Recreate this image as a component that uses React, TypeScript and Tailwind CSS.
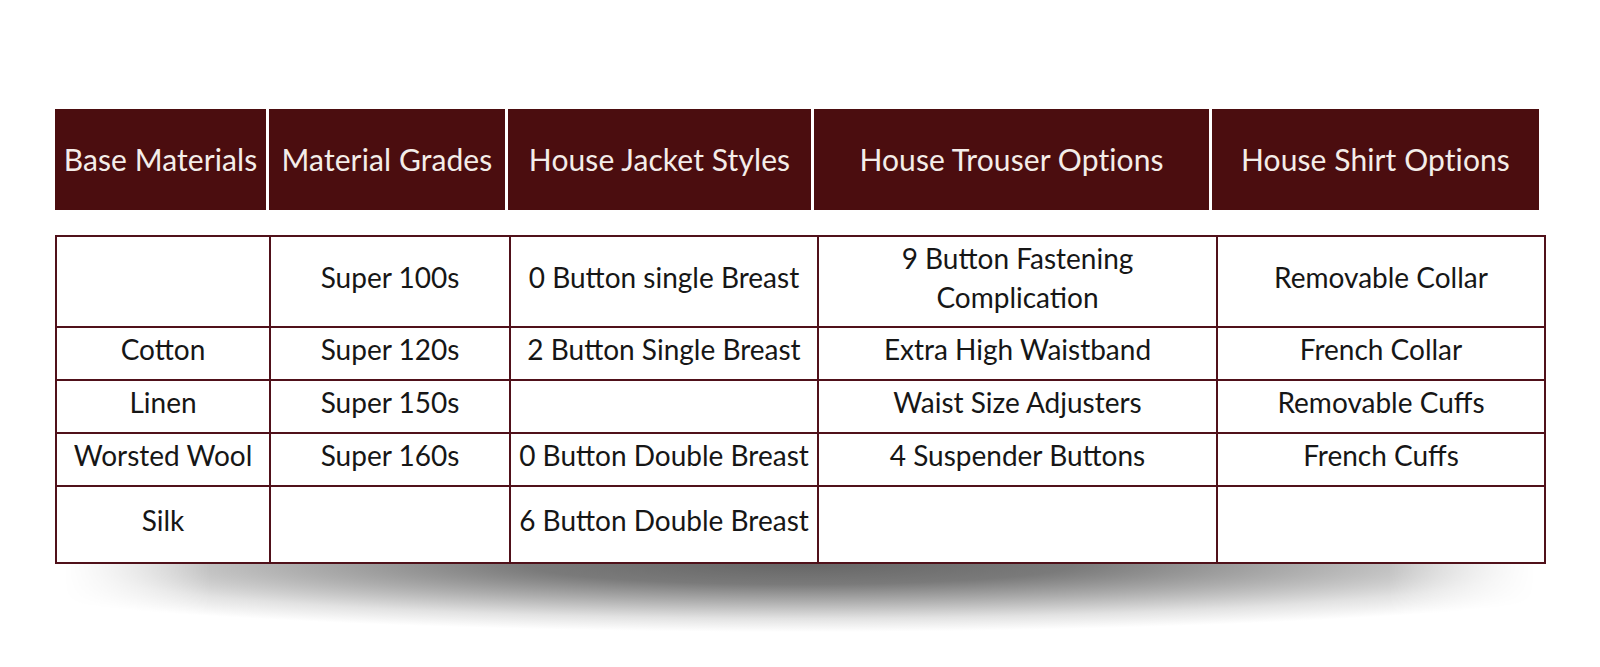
import React from "react";

const headers = [
  { label: "Base Materials", w: "w-[211px]" },
  { label: "Material Grades", w: "w-[236px]" },
  { label: "House Jacket Styles", w: "w-[303px]" },
  { label: "House Trouser Options", w: "w-[395px]" },
  { label: "House Shirt Options", w: "w-[327px]" },
];

const rows: { h: string; cells: string[][] }[] = [
  { h: "h-[91px]", cells: [[], ["Super 100s"], ["0 Button single Breast"], ["9 Button Fastening", "Complication"], ["Removable Collar"]] },
  { h: "h-[53px]", cells: [["Cotton"], ["Super 120s"], ["2 Button Single Breast"], ["Extra High Waistband"], ["French Collar"]] },
  { h: "h-[53px]", cells: [["Linen"], ["Super 150s"], [], ["Waist Size Adjusters"], ["Removable Cuffs"]] },
  { h: "h-[53px]", cells: [["Worsted Wool"], ["Super 160s"], ["0 Button Double Breast"], ["4 Suspender Buttons"], ["French Cuffs"]] },
  { h: "h-[77px]", cells: [["Silk"], [], ["6 Button Double Breast"], [], []] },
];

export default function App() {
  return (
    <div className="w-[1600px] h-[667px] bg-white overflow-hidden">
      <div className="pt-[109px] pl-[55px]">
        <div className="flex gap-[3px] w-[1484px]">
          {headers.map((h) => (
            <div
              key={h.label}
              className={`${h.w} h-[101px] flex-none bg-[#4b0d0f] flex items-center justify-center text-[#f4ede9] text-[30px] font-normal tracking-[0.1px] whitespace-nowrap`}
              style={{ fontFamily: '"Lato", "Open Sans", sans-serif' }}
            >
              {h.label}
            </div>
          ))}
        </div>

        <div className="mt-[25px] w-[1489px]">
          <table
            className="border-collapse table-fixed w-[1489px] text-[#161616] text-[28px]"
            style={{ fontFamily: '"Lato", "Noto Sans", sans-serif' }}
          >
            <colgroup>
              <col className="w-[214px]" />
              <col className="w-[240px]" />
              <col className="w-[308px]" />
              <col className="w-[399px]" />
              <col className="w-[328px]" />
            </colgroup>
            <tbody>
              {rows.map((r, i) => (
                <tr key={i} className={r.h}>
                  {r.cells.map((c, j) => (
                    <td
                      key={j}
                      className="border-2 border-[#50111a] text-center align-middle p-0 pb-[8px] leading-[39px] whitespace-nowrap"
                    >
                      {c.map((line, k) => (
                        <div key={k}>{line}</div>
                      ))}
                    </td>
                  ))}
                </tr>
              ))}
            </tbody>
          </table>
          <div className="h-[68px] mx-[8px] bg-[radial-gradient(ellipse_62%_100%_at_50%_0%,#666666_0%,#7a7a7a_30%,#adadad_55%,#e2e2e2_80%,#ffffff_100%)] [mask-image:linear-gradient(to_right,transparent,black_10%,black_90%,transparent)]" />
        </div>
      </div>
    </div>
  );
}
